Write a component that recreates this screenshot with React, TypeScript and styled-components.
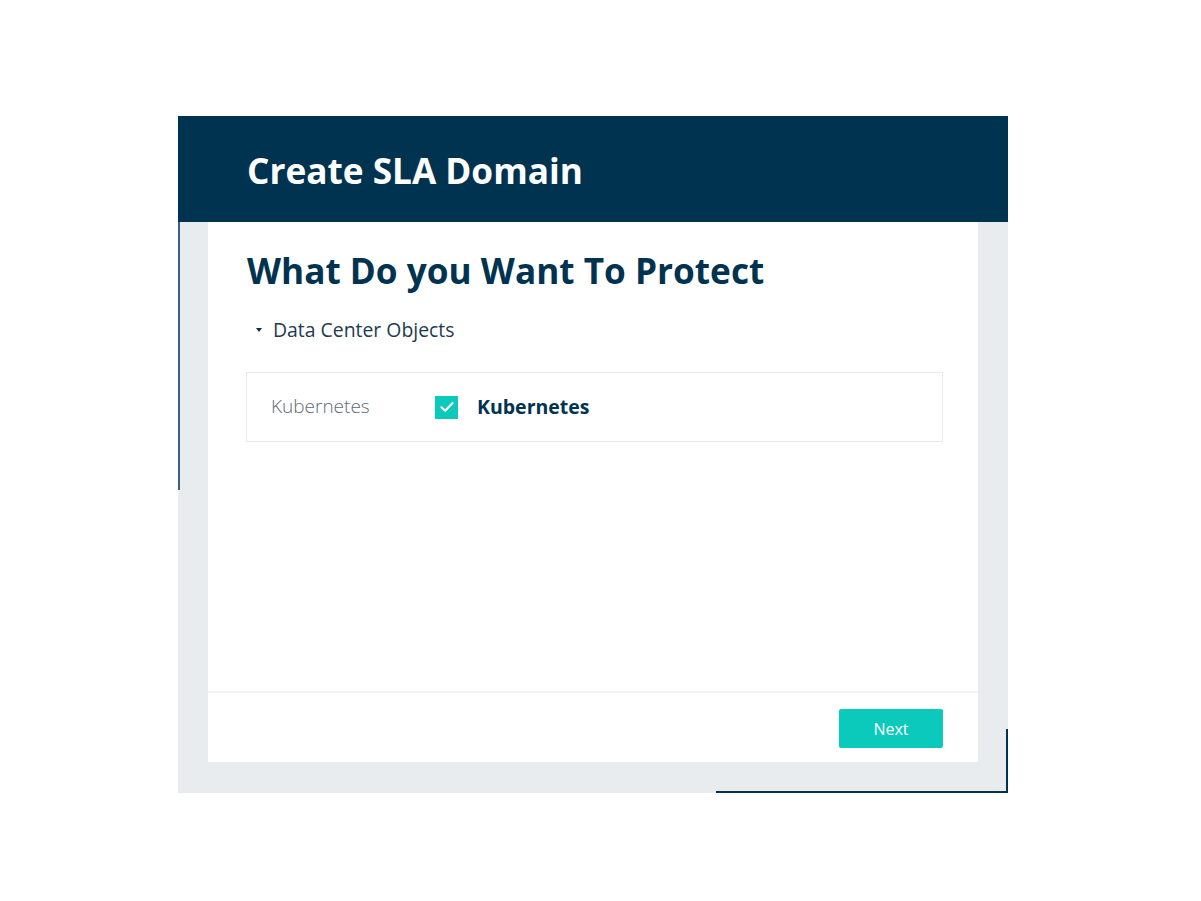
import React from 'react';
import styled, { createGlobalStyle } from 'styled-components';

const navy = '#003350';
const teal = '#0bc9bb';

const GlobalStyle = createGlobalStyle`
  html, body {
    margin: 0;
    padding: 0;
    background: #ffffff;
    font-family: 'Open Sans', 'Liberation Sans', sans-serif;
  }
`;

const Page = styled.div`
  padding: 116px 0 0 178px;
`;

const Panel = styled.div`
  position: relative;
  width: 830px;
  background: #e8ecef;
  padding-bottom: 31px;
`;

const Header = styled.div`
  height: 106px;
  background: ${navy};
  display: flex;
  align-items: center;
  padding: 2px 0 0 69px;
  box-sizing: border-box;
`;

const Title = styled.h1`
  margin: 0;
  color: #ffffff;
  font-size: 35.2px;
  font-weight: 700;
`;

const Card = styled.div`
  margin: 0 30px;
  height: 540px;
  background: #ffffff;
  display: flex;
  flex-direction: column;
`;

const Content = styled.div`
  flex: 1;
  padding: 23px 35px 0 38px;
`;

const Heading = styled.h2`
  margin: 0 0 0 1px;
  color: ${navy};
  font-size: 35.2px;
  font-weight: 700;
  line-height: 50px;
`;

const Toggle = styled.div`
  display: flex;
  align-items: center;
  margin: 22px 0 0 10px;
  color: #1d3a52;
  font-size: 19.4px;
  line-height: 26px;
`;

const Caret = styled.span`
  width: 0;
  height: 0;
  border-left: 3px solid transparent;
  border-right: 3px solid transparent;
  border-top: 4px solid ${navy};
  margin-right: 11px;
`;

const Row = styled.div`
  margin-top: 29px;
  height: 70px;
  border: 1px solid #e6eaec;
  box-sizing: border-box;
  display: flex;
  align-items: center;
  padding: 0 0 2px 24px;
`;

const RowLabel = styled.span`
  width: 164px;
  color: #5c6b77;
  font-size: 19px;
  font-weight: 300;
`;

const Check = styled.span`
  width: 23px;
  height: 23px;
  margin-top: 2px;
  background: ${teal};
  display: flex;
  align-items: center;
  justify-content: center;
  margin-right: 19px;
`;

const ItemName = styled.span`
  color: ${navy};
  font-size: 19.5px;
  font-weight: 700;
`;

const Footer = styled.div`
  height: 71px;
  border-top: 2px solid #f1f3f5;
  box-sizing: border-box;
  display: flex;
  align-items: center;
  justify-content: flex-end;
  padding: 2px 35px 0 0;
`;

const NextButton = styled.button`
  width: 104px;
  height: 39px;
  border: none;
  border-radius: 2px;
  background: ${teal};
  color: #ffffff;
  font-family: inherit;
  font-size: 16px;
  cursor: pointer;
`;

const EdgeLine = styled.span<{ $side: 'left' | 'right' | 'bottom' }>`
  position: absolute;
  background: ${navy};
  ${({ $side }) =>
    $side === 'left'
      ? 'left: 0; top: 0; width: 2px; height: 374px; opacity: 0.75;'
      : $side === 'right'
      ? 'right: 0; bottom: 0; width: 2px; height: 64px;'
      : 'right: 0; bottom: 0; height: 2px; width: 292px;'}
`;

export default function App() {
  return (
    <Page>
      <GlobalStyle />
      <Panel>
        <Header>
          <Title>Create SLA Domain</Title>
        </Header>
        <Card>
          <Content>
            <Heading>What Do you Want To Protect</Heading>
            <Toggle>
              <Caret />
              Data Center Objects
            </Toggle>
            <Row>
              <RowLabel>Kubernetes</RowLabel>
              <Check>
                <svg width="14" height="12" viewBox="0 0 14 12" fill="none">
                  <path d="M1.5 6.3 L5.2 9.8 L12.5 2" stroke="#ffffff" strokeWidth="2.2" strokeLinecap="round" strokeLinejoin="round" />
                </svg>
              </Check>
              <ItemName>Kubernetes</ItemName>
            </Row>
          </Content>
          <Footer>
            <NextButton>Next</NextButton>
          </Footer>
        </Card>
        <EdgeLine $side="left" />
        <EdgeLine $side="right" />
        <EdgeLine $side="bottom" />
      </Panel>
    </Page>
  );
}
